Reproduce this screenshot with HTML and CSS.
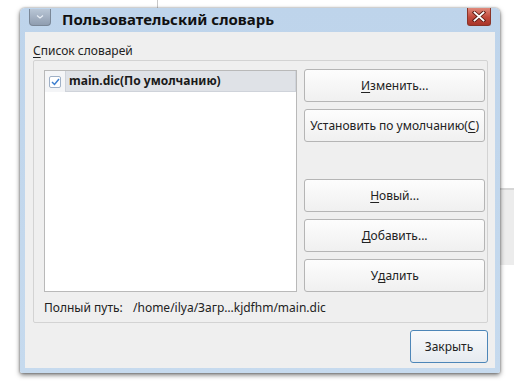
FILE: index.html
```html
<!DOCTYPE html>
<html lang="ru">
<head>
<meta charset="utf-8">
<title>Пользовательский словарь</title>
<link rel="stylesheet" href="styles.css">
</head>
<body>
<div class="desktop">
  <div class="bg-line"></div>
  <div class="bg-panel"></div>
  <div class="window">
    <div class="titlebar">
      <div class="menu-btn"><svg width="10" height="6" viewBox="0 0 10 6"><path d="M2 1.5 L5 4 L8 1.5" fill="none" stroke="#e8eef6" stroke-width="1.2"/></svg></div>
      <div class="title">Пользовательский словарь</div>
      <div class="close-btn"><svg width="14" height="11" viewBox="0 0 14 11"><path d="M2.5 1.5 L11.5 9.5 M11.5 1.5 L2.5 9.5" stroke="#5a1a12" stroke-width="3.6" stroke-linecap="square"/><path d="M2.5 1.5 L11.5 9.5 M11.5 1.5 L2.5 9.5" stroke="#ffffff" stroke-width="1.8" stroke-linecap="square"/></svg></div>
    </div>
    <div class="content">
      <div class="label"><u>С</u>писок словарей</div>
      <div class="group">
        <div class="main-row">
          <div class="list">
            <div class="item">
              <div class="check-cell">
                <span class="checkbox"><svg width="9" height="8" viewBox="0 0 9 8"><path d="M1 4 L3.5 6.5 L8 1" fill="none" stroke="#3d7fd0" stroke-width="1.5"/></svg></span>
              </div>
              <div class="item-text">main.dic(По умолчанию)</div>
            </div>
          </div>
          <div class="buttons">
            <div class="btn"><u>И</u>зменить...</div>
            <div class="btn">Установить по умолчанию(<u>С</u>)</div>
            <div class="spacer"></div>
            <div class="btn"><u>Н</u>овый...</div>
            <div class="btn"><u>Д</u>обавить...</div>
            <div class="btn">У<u>д</u>алить</div>
          </div>
        </div>
        <div class="path-row">
          <span class="path-label">Полный путь:</span>
          <span class="path-value">/home/ilya/Загр…kjdfhm/main.dic</span>
        </div>
      </div>
      <div class="footer">
        <div class="btn close">Закрыть</div>
      </div>
    </div>
  </div>
</div>
</body>
</html>
```
FILE: styles.css
```css
html, body {
  margin: 0;
  padding: 0;
  background: #ffffff;
}
body {
  width: 514px;
  height: 389px;
  overflow: hidden;
  font-family: "Noto Sans", "Open Sans", sans-serif;
  font-size: 12px;
  color: #222;
}
u { text-decoration: underline; text-underline-offset: 2px; }
.desktop {
  position: relative;
  width: 514px;
  height: 389px;
}
.bg-line {
  position: absolute;
  left: 157px;
  top: 0;
  width: 1px;
  height: 10px;
  background: #c8c8c8;
}
.bg-panel {
  position: absolute;
  left: 496px;
  top: 188px;
  width: 18px;
  height: 75px;
  background: #ececec;
  border-top: 2px solid #d6d6d6;
}
.window {
  position: absolute;
  left: 20px;
  top: 8px;
  width: 480px;
  height: 365px;
  background: linear-gradient(#bed4eb, #c6daee);
  border-radius: 5px 5px 2px 2px;
  box-shadow: 0 2px 5px rgba(0,0,0,0.55), 0 0 2px rgba(0,0,0,0.4);
  display: flex;
  flex-direction: column;
}
.titlebar {
  height: 24px;
  display: flex;
  align-items: flex-start;
  position: relative;
}
.menu-btn {
  margin-left: 9px;
  margin-top: 1px;
  width: 22px;
  height: 17px;
  border: 1px solid #7a8797;
  border-top: none;
  border-radius: 0 0 4px 4px;
  background: linear-gradient(#b9c6d6, #8f9db0);
  display: flex;
  align-items: center;
  justify-content: center;
  box-sizing: border-box;
}
.title {
  margin-left: 11px;
  margin-top: 2px;
  font-size: 15px;
  font-weight: bold;
  color: #111;
  line-height: 18px;
  flex: 1;
}
.close-btn {
  margin-right: 9px;
  width: 24px;
  height: 18px;
  box-sizing: border-box;
  border: 1px solid #8a3428;
  border-top: none;
  border-radius: 0 0 3px 3px;
  background: linear-gradient(#e08a7c, #c1483a 55%, #a8352a);
  display: flex;
  align-items: center;
  justify-content: center;
}
.content {
  margin: 0 5px 5px 5px;
  flex: 1;
  background: #efefef;
  padding: 10px 7px 0 8px;
  display: flex;
  flex-direction: column;
}
.label {
  line-height: 17px;
  height: 17px;
  margin-bottom: 1px;
}
.group {
  border: 1px solid #d3d3d3;
  border-radius: 2px;
  padding: 9px 2px 0 10px;
  height: 263px;
  box-sizing: border-box;
  display: flex;
  flex-direction: column;
}
.main-row {
  display: flex;
  gap: 7px;
}
.list {
  width: 254px;
  height: 222px;
  box-sizing: border-box;
  background: #ffffff;
  border: 1px solid #b9b9b9;
}
.item {
  display: flex;
  height: 21px;
}
.check-cell {
  width: 20px;
  background: #f4f5f7;
  display: flex;
  align-items: center;
  justify-content: center;
}
.checkbox {
  width: 12px;
  height: 12px;
  box-sizing: border-box;
  border: 1px solid #9fb0c6;
  border-radius: 2px;
  background: #fff;
  display: flex;
  align-items: center;
  justify-content: center;
}
.item-text {
  flex: 1;
  background: #dfe2e7;
  border: 1px solid #cfd3da;
  border-top: none;
  font-weight: bold;
  color: #1a1a1a;
  line-height: 20px;
  padding-left: 3px;
}
.buttons {
  width: 181px;
  display: flex;
  flex-direction: column;
  gap: 7px;
  margin-top: -1px;
}
.spacer { height: 23px; }
.btn {
  height: 33px;
  box-sizing: border-box;
  border: 1px solid #b5b5b5;
  border-radius: 3px;
  background: linear-gradient(#fdfdfd, #f0f0f0);
  display: flex;
  align-items: center;
  justify-content: center;
  color: #222;
  white-space: nowrap;
}
.path-row {
  height: 30px;
  display: flex;
  align-items: center;
  margin-top: 1px;
}
.path-label { width: 89px; }
.footer {
  display: flex;
  justify-content: flex-end;
  padding-top: 7px;
}
.btn.close {
  width: 78px;
  height: 33px;
  border: 1px solid #4d86b8;
  background: linear-gradient(#f8f9fb, #e6ebf0);
}
```
